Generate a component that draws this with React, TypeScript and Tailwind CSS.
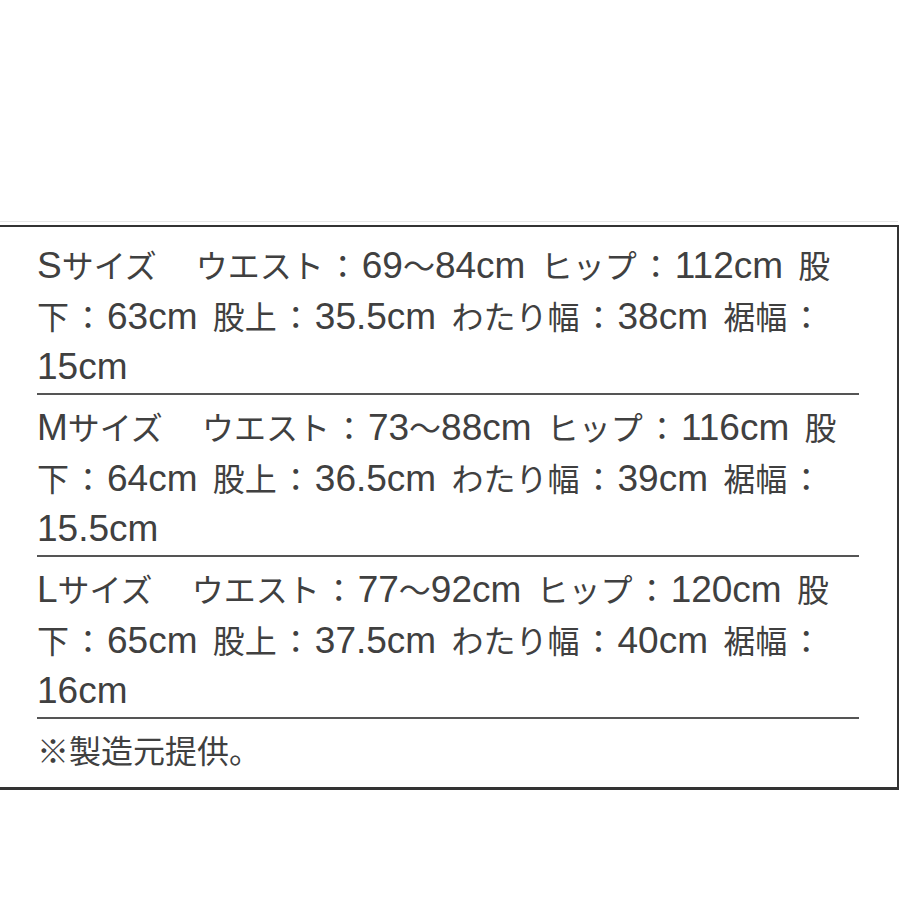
const sizes = [
  {
    lines: [
      "Sサイズ　ウエスト：69〜84cm ヒップ：112cm 股",
      "下：63cm 股上：35.5cm わたり幅：38cm 裾幅：",
      "15cm",
    ],
  },
  {
    lines: [
      "Mサイズ　ウエスト：73〜88cm ヒップ：116cm 股",
      "下：64cm 股上：36.5cm わたり幅：39cm 裾幅：",
      "15.5cm",
    ],
  },
  {
    lines: [
      "Lサイズ　ウエスト：77〜92cm ヒップ：120cm 股",
      "下：65cm 股上：37.5cm わたり幅：40cm 裾幅：",
      "16cm",
    ],
  },
];

// latin runs are drawn a bit bigger than the kana, like the original font
function Line({ text }: { text: string }) {
  const parts = text.split(/([\x20-\x7E]+|：|　)/).filter((p) => p !== "");
  return (
    <div className="h-[51px] leading-[51px] whitespace-pre">
      {parts.map((part, i) =>
        /^[\x20-\x7E]+$/.test(part) ? (
          <span
            key={i}
            className="text-[37px] [word-spacing:5px] font-['Liberation_Sans',sans-serif]"
          >
            {part}
          </span>
        ) : part === "：" ? (
          <span key={i} className="px-[3px] text-[32px] font-['Noto_Sans_CJK_JP',sans-serif]">
            {part}
          </span>
        ) : part === "　" ? (
          <span key={i} className="pr-[7px] text-[32px] font-['Noto_Sans_CJK_JP',sans-serif]">
            {part}
          </span>
        ) : (
          <span key={i} className="text-[32px] font-['Noto_Sans_CJK_JP',sans-serif]">
            {part}
          </span>
        ),
      )}
    </div>
  );
}

export default function App() {
  return (
    <div className="min-h-screen bg-white pt-[221px] text-[#404040]">
      <div className="h-px bg-[#e6e6e6] mr-[2px]" />
      <div className="mt-[3px] mr-px border-t-2 border-r-2 border-b-[3px] border-[#333]">
        <div className="pl-[37px] pr-[38px]">
          {sizes.map((size, idx) => (
            <div key={idx} className={idx === 0 ? "pt-[12px]" : "pt-[6px]"}>
              {size.lines.map((line, i) => (
                <Line key={i} text={line} />
              ))}
              <div className="mt-px h-[2px] bg-[#555]" />
            </div>
          ))}
          <div className="pt-[5px] pb-[12px]">
            <Line text="※製造元提供。" />
          </div>
        </div>
      </div>
    </div>
  );
}
